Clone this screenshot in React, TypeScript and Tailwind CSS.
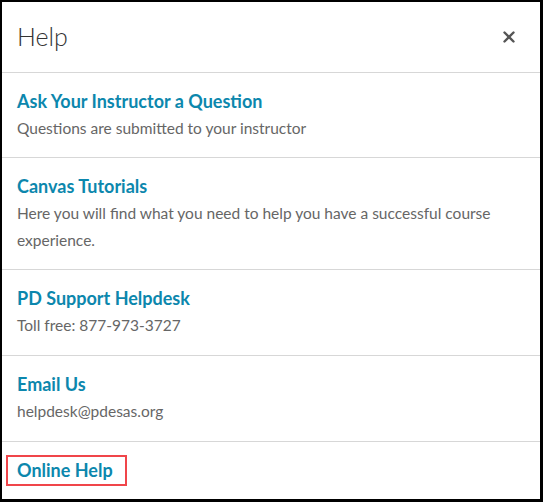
import { X } from "lucide-react";

const items = [
  { title: "Ask Your Instructor a Question", desc: "Questions are submitted to your instructor", pad: "pb-[15px]" },
  { title: "Canvas Tutorials", desc: "Here you will find what you need to help you have a successful course experience.", pad: "pb-[15px]" },
  { title: "PD Support Helpdesk", desc: "Toll free: 877-973-3727", pad: "pb-[16px]" },
  { title: "Email Us", desc: "helpdesk@pdesas.org", pad: "pb-[16px]" }
];

export default function App() {
  return (
    <div className="h-[502px] w-[543px] overflow-hidden border-t-2 border-l-2 border-r-[3px] border-b-[3px] border-black bg-white font-['Lato',sans-serif]">
      <header className="flex h-[71px] items-center justify-between border-b border-[#d7d7d7] pl-[15px] pr-[22px]">
        <h1 className="text-[25px] font-light text-[#333]">Help</h1>
        <X className="h-[18px] w-[18px] text-[#555]" strokeWidth={3.2} />
      </header>
      <ul>
        {items.map((item) => (
          <li key={item.title} className={`border-b border-[#d7d7d7] px-[15px] pt-[15px] ${item.pad}`}>
            <a className="block text-[18px] font-bold leading-[27px] text-[#0c87ad]">{item.title}</a>
            <p className="text-[15.5px] leading-[27px] text-[#666]">{item.desc}</p>
          </li>
        ))}
        <li className="px-[15px] pt-[15px]">
          <a className="relative block text-[18px] font-bold leading-[27px] text-[#0c87ad]">
            Online Help
            <span className="absolute -left-[11px] -top-[2px] h-[31px] w-[121px] border-2 border-[#f0454a]" />
          </a>
        </li>
      </ul>
    </div>
  );
}
